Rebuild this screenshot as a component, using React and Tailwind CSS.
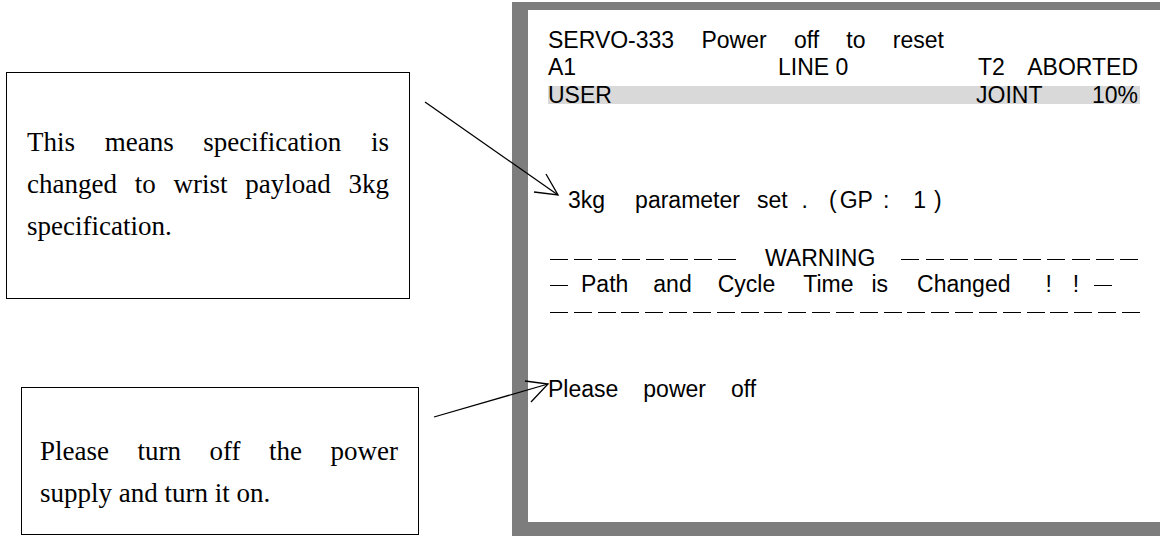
import React from 'react';

// row of thin dashes (the screen's full-width minus signs)
const Dashes = ({ n, className = '' }) => (
  <div className={`flex items-center justify-between ${className}`}>
    {Array.from({ length: n }).map((_, i) => (
      <span key={i} className="block w-[18px] h-px bg-black translate-y-[1px]" />
    ))}
  </div>
);

const Dash = ({ className = '' }) => (
  <span className={`self-center block w-[18px] h-px bg-black translate-y-[1px] ${className}`} />
);

const App = () => {
  return (
    <div className="relative w-[1160px] h-[536px] overflow-hidden bg-white">
      <div className="flex h-full">
        {/* left notes */}
        <div className="w-[512px] shrink-0 font-['Liberation_Serif',serif] text-[27px] leading-[42px] text-black">
          <div className="ml-[6px] mt-[72px] w-[404px] h-[227px] border border-black pl-[20px] pr-[20px] pt-[48px]">
            <p className="text-justify [text-align-last:justify]">This means specification is</p>
            <p className="text-justify [text-align-last:justify]">changed to wrist payload 3kg</p>
            <p>specification.</p>
          </div>
          <div className="ml-[21px] mt-[88px] w-[398px] h-[148px] border border-black pl-[18px] pr-[20px] pt-[42px]">
            <p className="text-justify [text-align-last:justify]">Please turn off the power</p>
            <p>supply and turn it on.</p>
          </div>
        </div>

        {/* teach pendant screen */}
        <div className="flex-1 mt-[2px] border-l-[16px] border-t-[8px] border-b-[14px] border-[#7d7d7d] bg-white">
          <div className="pl-[20px] pt-[17px] font-['Liberation_Sans',sans-serif] text-[23px] leading-[27px] text-black whitespace-pre">
            <div className="flex w-[396px] justify-between">
              <span>SERVO-333</span>
              <span>Power</span>
              <span>off</span>
              <span>to</span>
              <span>reset</span>
            </div>
            <div className="flex w-[590px]">
              <span className="w-[230px]">A1</span>
              <span className="w-[200px]">LINE 0</span>
              <span className="flex-1 flex justify-between">
                <span>T2</span>
                <span>ABORTED</span>
              </span>
            </div>
            <div className="flex w-[592px] mt-[5px] h-[18px] leading-[18px] bg-[#d9d9d9] pr-[2px]">
              <span className="w-[428px]">USER</span>
              <span className="flex-1">JOINT</span>
              <span>10%</span>
            </div>

            <div className="mt-[83px] pl-[20px] flex">
              <span>3kg</span>
              <span className="ml-[30px]">parameter</span>
              <span className="ml-[17px]">set</span>
              <span className="ml-[14px]">.</span>
              <span className="ml-[21px]">(</span>
              <span className="ml-[3px]">GP</span>
              <span className="ml-[10px]">:</span>
              <span className="ml-[24px]">1</span>
              <span className="ml-[8px]">)</span>
            </div>

            <div className="mt-[31px] h-[26px] flex items-center">
              <Dashes n={8} className="w-[188px] pl-[2px]" />
              <span className="ml-[29px]">WARNING</span>
              <Dashes n={10} className="ml-[26px] w-[237px]" />
            </div>
            <div className="flex h-[27px]">
              <Dash className="ml-[2px]" />
              <span className="ml-[13px]">Path</span>
              <span className="ml-[25px]">and</span>
              <span className="ml-[26px]">Cycle</span>
              <span className="ml-[28px]">Time</span>
              <span className="ml-[18px]">is</span>
              <span className="ml-[29px]">Changed</span>
              <span className="ml-[35px]">!</span>
              <span className="ml-[21px]">!</span>
              <Dash className="ml-[15px]" />
            </div>
            <Dashes n={25} className="w-[592px] h-[27px] pl-[2px]" />

            <div className="mt-[51px] flex gap-[25px]">
              <span>Please</span>
              <span>power</span>
              <span>off</span>
            </div>
          </div>
        </div>
      </div>

      {/* callout arrows */}
      <svg className="absolute inset-0 pointer-events-none" width="1160" height="536">
        <g stroke="#000" strokeWidth="1.3" fill="none">
          <line x1="425" y1="102" x2="558" y2="195" />
          <polyline points="546,174 558,195 534,192" />
          <line x1="434" y1="417" x2="548" y2="384" />
          <polyline points="525,381 548,384 531,402" />
        </g>
      </svg>
    </div>
  );
};

export default App;
